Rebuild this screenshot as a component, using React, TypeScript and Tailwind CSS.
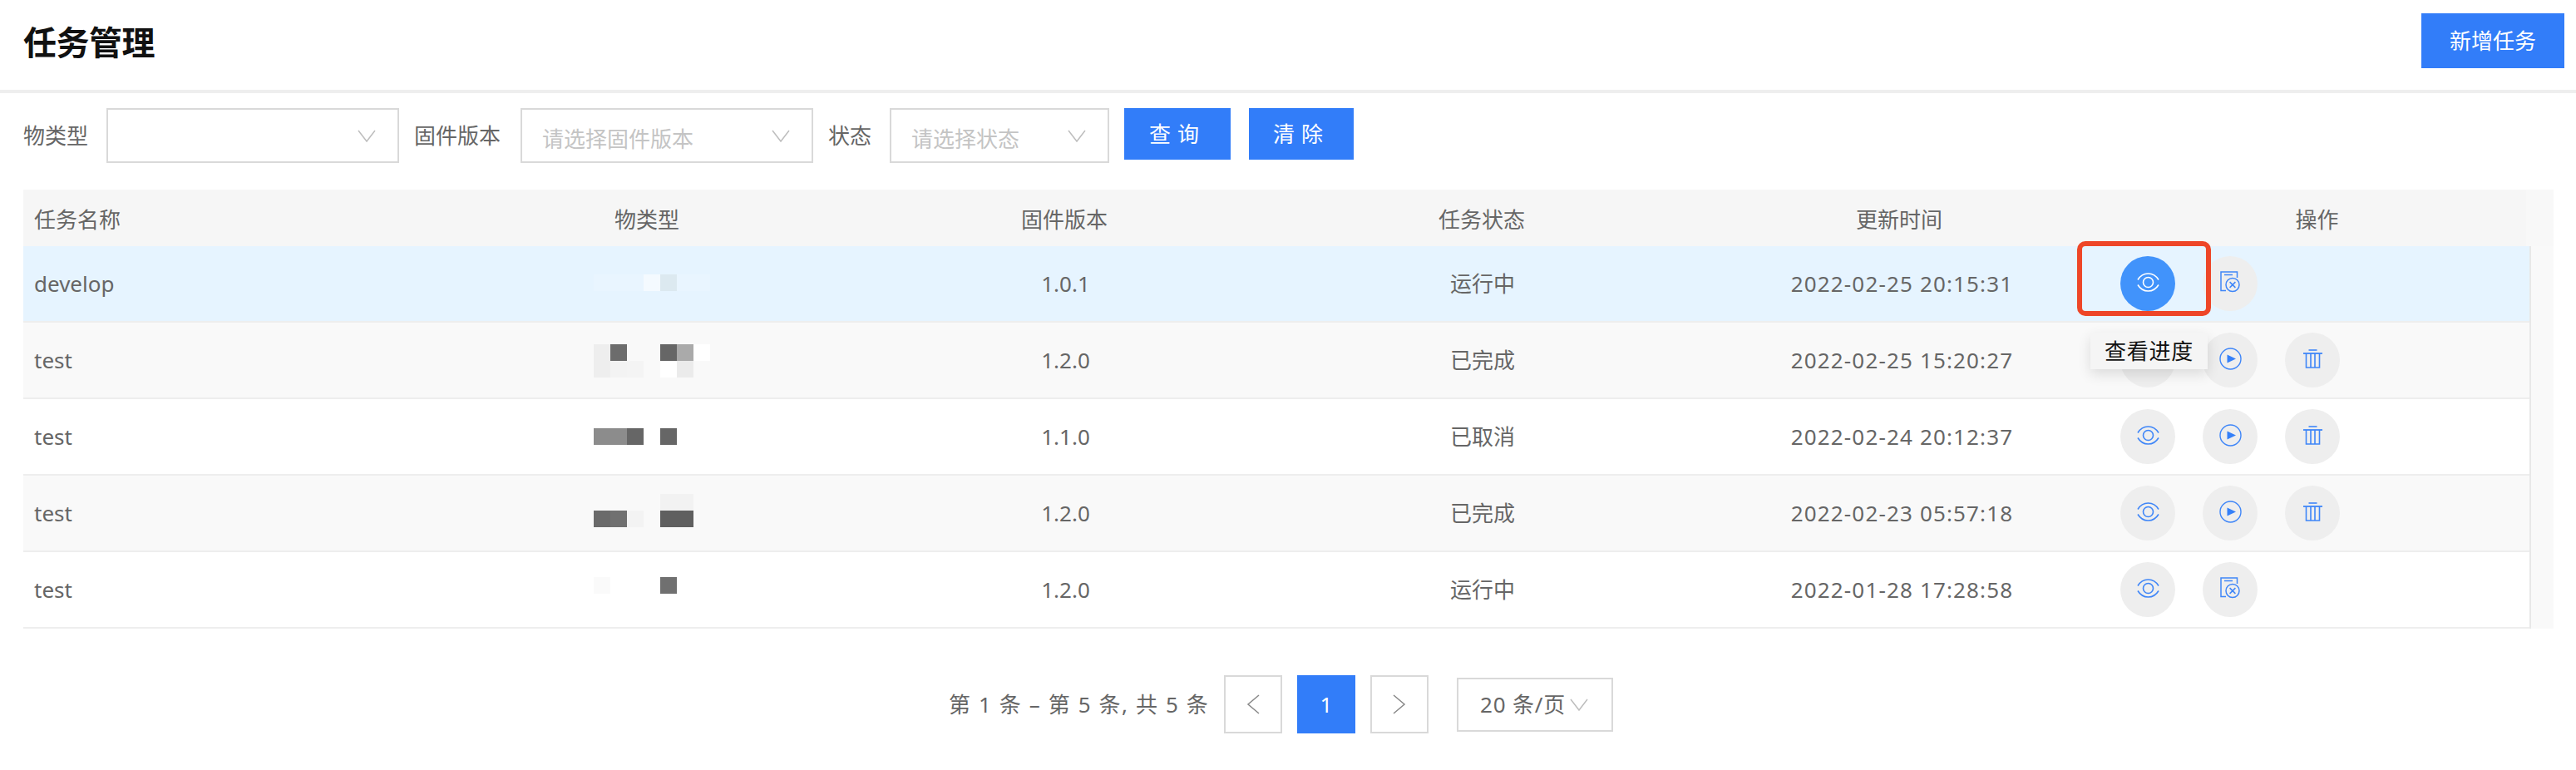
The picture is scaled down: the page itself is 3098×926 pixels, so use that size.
import type { ReactNode } from 'react'

const FONT = "font-['Noto_Sans','Noto_Sans_CJK_SC',sans-serif]"
const GRID = 'grid grid-cols-[499px_502px_502px_502px_502px_1fr]'

type Cell = [number, number, string]
type Task = {
  name: string
  version: string
  status: string
  time: string
  running: boolean
  bg: string
  mosaicTop: string
  mosaic: Cell[]
}

// 打码的物类型：[列, 行, 颜色]
const tasks: Task[] = [
  {
    name: 'develop',
    version: '1.0.1',
    status: '运行中',
    time: '2022-02-25 20:15:31',
    running: true,
    bg: 'bg-[#e6f4ff]',
    mosaicTop: 'mt-[-2px]',
    mosaic: [
      [0, 0, '#e9f5ff'],
      [1, 0, '#e9f5ff'],
      [2, 0, '#e9f5ff'],
      [3, 0, '#f4faff'],
      [4, 0, '#dce9f0'],
      [5, 0, '#e9f5ff'],
      [6, 0, '#e9f5ff'],
    ],
  },
  {
    name: 'test',
    version: '1.2.0',
    status: '已完成',
    time: '2022-02-25 15:20:27',
    running: false,
    bg: 'bg-[#f9f9f9]',
    mosaicTop: 'mt-[1px]',
    mosaic: [
      [0, 0, '#eeeeee'],
      [1, 0, '#6c6c6c'],
      [4, 0, '#666666'],
      [5, 0, '#aaaaaa'],
      [6, 0, '#ffffff'],
      [0, 1, '#eeeeee'],
      [1, 1, '#f3f3f3'],
      [2, 1, '#f4f4f4'],
      [4, 1, '#ffffff'],
      [5, 1, '#ebebeb'],
    ],
  },
  {
    name: 'test',
    version: '1.1.0',
    status: '已取消',
    time: '2022-02-24 20:12:37',
    running: false,
    bg: 'bg-white',
    mosaicTop: 'mt-[-1px]',
    mosaic: [
      [0, 0, '#8c8c8c'],
      [1, 0, '#8c8c8c'],
      [2, 0, '#666666'],
      [4, 0, '#666666'],
    ],
  },
  {
    name: 'test',
    version: '1.2.0',
    status: '已完成',
    time: '2022-02-23 05:57:18',
    running: false,
    bg: 'bg-[#f9f9f9]',
    mosaicTop: 'mt-[-6px]',
    mosaic: [
      [4, 0, '#f2f2f2'],
      [5, 0, '#f2f2f2'],
      [0, 1, '#6a6a6a'],
      [1, 1, '#707070'],
      [2, 1, '#f3f3f3'],
      [4, 1, '#5f5f5f'],
      [5, 1, '#5f5f5f'],
    ],
  },
  {
    name: 'test',
    version: '1.2.0',
    status: '运行中',
    time: '2022-01-28 17:28:58',
    running: true,
    bg: 'bg-white',
    mosaicTop: 'mt-[-10px]',
    mosaic: [
      [0, 0, '#fafafa'],
      [4, 0, '#707070'],
    ],
  },
]

function Chevron({ className = '' }: { className?: string }) {
  return (
    <svg width="22" height="15" viewBox="0 0 22 15" fill="none" className={className}>
      <path d="M1 1l10 13L21 1" stroke="#bdbdbd" strokeWidth="1.5" />
    </svg>
  )
}

function EyeIcon({ color }: { color: string }) {
  return (
    <svg width="27" height="23" viewBox="0 0 27 23" fill="none" stroke={color} strokeWidth="1.6">
      <path d="M1 8.5C4 3.5 8.5 1 13.5 1S23 3.5 26 8.5" />
      <path d="M1 14.5C4 19.5 8.5 22 13.5 22S23 19.5 26 14.5" />
      <circle cx="13.5" cy="11.5" r="6" />
    </svg>
  )
}

function PlayIcon() {
  return (
    <svg width="27" height="27" viewBox="0 0 27 27" fill="none">
      <circle cx="13.5" cy="13.5" r="12.5" stroke="#3f86f8" strokeWidth="1.4" />
      <path d="M9.5 8.5l10.5 5-10.5 5z" fill="#3580f8" />
    </svg>
  )
}

function TrashIcon() {
  return (
    <svg width="23" height="23" viewBox="0 0 23 23" fill="none" stroke="#3f86f8" strokeWidth="1.6">
      <path d="M6.5 1h10" />
      <path d="M0 5h23" strokeWidth="1.8" />
      <path d="M3.5 5v17h16V5" />
      <path d="M9 5v17M14 5v17" />
    </svg>
  )
}

function CancelIcon() {
  return (
    <svg width="24" height="26" viewBox="0 0 24 26" fill="none" stroke="#3f86f8" strokeWidth="1.5">
      <path d="M7 23.5H1V1h19.5v7" />
      <path d="M5 4.5h10" />
      <circle cx="15" cy="16.5" r="8" />
      <path d="M11.6 13.1l6.8 6.8M18.4 13.1l-6.8 6.8" />
    </svg>
  )
}

function RoundButton({ active, children }: { active?: boolean; children: ReactNode }) {
  return (
    <div
      className={`w-[66px] h-[66px] rounded-full flex items-center justify-center pb-1 ${
        active ? 'bg-[#4193fb]' : 'bg-[#eeeeee]'
      }`}
    >
      {children}
    </div>
  )
}

function Mosaic({ cells, className }: { cells: Cell[]; className: string }) {
  return (
    <div className={`grid grid-cols-[repeat(7,20px)] auto-rows-[20px] ml-[187px] ${className}`}>
      {cells.map(([col, row, color]) => (
        <div
          key={`${col}-${row}`}
          style={{ gridColumnStart: col + 1, gridRowStart: row + 1, backgroundColor: color }}
        />
      ))}
    </div>
  )
}

function Select({ width, placeholder }: { width: string; placeholder?: string }) {
  return (
    <div className={`${width} h-[66px] border-2 border-[#d9d9d9] bg-white flex items-center justify-between pl-6 pr-[26px]`}>
      <span className="text-[#c4c4c4] pt-2">{placeholder}</span>
      <Chevron />
    </div>
  )
}

export default function App() {
  return (
    <div className={`min-h-screen bg-white text-[26px] text-[#666666] ${FONT}`}>
      {/* ヘッダー */}
      <div className="h-[112px] border-b-4 border-[#eeeeee] flex justify-between items-start pt-4 pl-7 pr-[14px]">
        <h1 className="text-[40px] tracking-[-0.5px] leading-[70px] font-semibold text-[#111111]">任务管理</h1>
        <button className="w-[172px] h-[66px] bg-[#327df9] text-white">新增任务</button>
      </div>

      {/* 查询条件 */}
      <div className="flex items-start pt-[18px] pl-7 h-[116px]">
        <span className="leading-[66px] mr-[22px]">物类型</span>
        <Select width="w-[352px]" />
        <span className="leading-[66px] ml-[18px] mr-6">固件版本</span>
        <Select width="w-[352px]" placeholder="请选择固件版本" />
        <span className="leading-[66px] ml-[18px] mr-[22px]">状态</span>
        <Select width="w-[264px]" placeholder="请选择状态" />
        <button className="w-[128px] h-[62px] ml-[18px] bg-[#327df9] text-white tracking-[8px]">查询</button>
        <button className="w-[126px] h-[62px] ml-[22px] bg-[#327df9] text-white tracking-[8px]">清除</button>
      </div>

      {/* 表格 */}
      <div className="ml-7 w-[3043px]">
        <div className="flex h-[68px] bg-[#f8f8f8]">
          <div className={`${GRID} w-[3010px] bg-[#f6f6f6] items-center text-center pt-1`}>
            <div className="text-left pl-[13px]">任务名称</div>
            <div>物类型</div>
            <div>固件版本</div>
            <div>任务状态</div>
            <div>更新时间</div>
            <div>操作</div>
          </div>
        </div>
        <div className="flex">
          <div className="w-[3014px]">
            {tasks.map((task, i) => (
              <div
                key={i}
                className={`${GRID} h-[92px] border-b-2 border-[#eeeeee] items-center text-center ${task.bg}`}
              >
                <div className="text-left pl-[13px]">{task.name}</div>
                <Mosaic cells={task.mosaic} className={task.mosaicTop} />
                <div className="pl-[3px]">{task.version}</div>
                <div className="pl-[2px]">{task.status}</div>
                <div className="tracking-[1.15px] pl-[7px]">{task.time}</div>
                <div className="relative flex gap-[33px] pl-[15px]">
                  <RoundButton active={i === 0}>
                    <EyeIcon color={i === 0 ? '#ffffff' : '#3f86f8'} />
                  </RoundButton>
                  <RoundButton>{task.running ? <CancelIcon /> : <PlayIcon />}</RoundButton>
                  {!task.running && (
                    <RoundButton>
                      <TrashIcon />
                    </RoundButton>
                  )}
                  {i === 0 && (
                    <>
                      <div className="absolute left-[-37px] top-[-18px] w-[161px] h-[90px] border-[6px] border-[#ee4628] rounded-[10px]" />
                      <div className="absolute z-10 left-[-21px] top-[92px] w-[141px] h-[44px] bg-[#f5f5f5] text-[#111111] tracking-[0.8px] flex items-center justify-center shadow-[0_6px_16px_rgba(0,0,0,0.12)]">
                        查看进度
                      </div>
                    </>
                  )}
                </div>
              </div>
            ))}
          </div>
          <div className="w-[29px] border-l-2 border-[#e8e8e8] bg-[#f9f9f9]" />
        </div>
      </div>

      {/* ページネーション */}
      <div className="flex items-center mt-14 ml-[1141px]">
        <span className="w-[331px] tracking-[1.6px] whitespace-nowrap">第 1 条 – 第 5 条, 共 5 条</span>
        <div className="w-[70px] h-[70px] border-2 border-[#d9d9d9] flex items-center justify-center">
          <svg width="16" height="24" viewBox="0 0 16 24" fill="none">
            <path d="M15 1L2 12l13 11" stroke="#888888" strokeWidth="1.5" />
          </svg>
        </div>
        <div className="w-[70px] h-[70px] ml-[18px] bg-[#327df9] text-white flex items-center justify-center">1</div>
        <div className="w-[70px] h-[70px] ml-[18px] border-2 border-[#d9d9d9] flex items-center justify-center">
          <svg width="16" height="24" viewBox="0 0 16 24" fill="none">
            <path d="M1 1l13 11L1 23" stroke="#888888" strokeWidth="1.5" />
          </svg>
        </div>
        <div className="w-[188px] h-[65px] ml-[34px] border-2 border-[#d9d9d9] flex items-center pl-[26px] gap-[5px] whitespace-nowrap">
          <span className="tracking-[0.8px]">20 条/页</span>
          <Chevron />
        </div>
      </div>
    </div>
  )
}
